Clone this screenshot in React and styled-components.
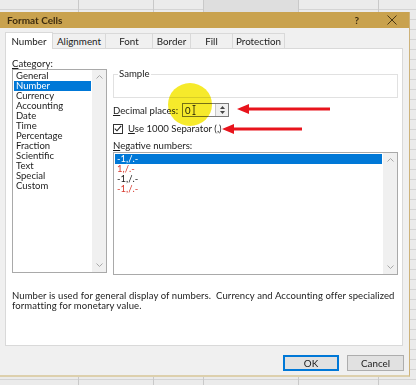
import React from 'react'
import styled, { createGlobalStyle } from 'styled-components'

const GlobalStyle = createGlobalStyle`
  html, body {
    margin: 0;
    padding: 0;
  }
  body {
    font-family: Lato, "Liberation Sans", sans-serif;
    color: #1b1b1b;
  }
`

const gridLine = x => `linear-gradient(#c9c9c9, #c9c9c9) ${x}px 0 / 1px 100% no-repeat`

const Desk = styled.div`
  width: 416px;
  height: 385px;
  overflow: hidden;
  box-sizing: border-box;
  padding-top: 12px;
  background:
    ${gridLine(78)}, ${gridLine(153)}, ${gridLine(203)}, ${gridLine(298)}, ${gridLine(378)},
    linear-gradient(#dedede, #dedede) 203px 0 / 95px 12px no-repeat,
    repeating-linear-gradient(to bottom, transparent 0 9px, #d4d4d4 9px 10px),
    #ebebeb;
`

const Dialog = styled.div`
  position: relative;
  width: 410px;
  box-sizing: border-box;
  background: #f0f0f0;
  border-right: 1px solid #cdb27a;
  border-bottom: 2px solid #ddd0ad;
`

const TitleBar = styled.div`
  display: flex;
  align-items: center;
  height: 16px;
  padding: 0 12px 0 7px;
  background: #c9a24e;
  color: #3d2c10;
  font-size: 10px;
  font-weight: 700;
`

const Title = styled.span`
  flex: 1;
`

const Help = styled.span`
  margin-right: 28px;
  font-weight: 700;
  font-size: 10px;
`

const Body = styled.div`
  padding: 5px 6px 0 5px;
`

const TabBar = styled.div`
  display: flex;
  height: 15px;
`

const Tab = styled.div`
  display: flex;
  align-items: center;
  justify-content: center;
  box-sizing: border-box;
  width: ${p => p.$w}px;
  height: ${p => (p.$active ? 17 : 15)}px;
  margin-top: ${p => (p.$active ? -1 : 0)}px;
  margin-right: -1px;
  border: 1px solid #d9d9d9;
  border-bottom: none;
  background: ${p => (p.$active ? '#fff' : '#f0f0f0')};
  position: relative;
  z-index: ${p => (p.$active ? 2 : 1)};
  font-size: 9.8px;
`

const Panel = styled.div`
  box-sizing: border-box;
  height: 298px;
  padding: 9px 4px 0 6px;
  background: #fff;
  border: 1px solid #d9d9d9;
`

const Columns = styled.div`
  display: grid;
  grid-template-columns: 95px 285px;
  column-gap: 6px;
`

const Column = styled.div`
  display: flex;
  flex-direction: column;
  padding-top: ${p => p.$top || 0}px;
`

const Label = styled.div`
  font-size: 9.6px;
  line-height: 11px;
  margin-top: ${p => p.$mt || 0}px;
`

const ListBox = styled.div`
  display: grid;
  grid-template-columns: 1fr 14px;
  box-sizing: border-box;
  height: ${p => p.$h}px;
  margin-top: ${p => p.$mt || 0}px;
  border: 1px solid #a9a9a9;
`

const Items = styled.div`
  padding: 1px;
`

const Item = styled.div`
  font-size: 9.5px;
  line-height: 10px;
  height: 10px;
  padding-left: 2px;
  white-space: nowrap;
  background: ${p => (p.$selected ? '#0078d7' : 'transparent')};
  color: ${p => (p.$selected ? '#fff' : p.$red ? '#d83a2e' : '#1b1b1b')};
`

const Scroll = styled.div`
  display: flex;
  flex-direction: column;
  justify-content: space-between;
  align-items: center;
  padding: 5px 0;
  background: #f0f0f0;
`

const Group = styled.fieldset`
  box-sizing: border-box;
  height: 29px;
  margin: 0;
  padding: 0 4px;
  border: 1px solid #e1e1e1;

  legend {
    padding: 0 1px;
    margin-left: 0;
    font-size: 9.6px;
    line-height: 10px;
  }
`

const Row = styled.div`
  display: flex;
  align-items: center;
  gap: ${p => p.$gap || 0}px;
  height: ${p => p.$h}px;
  margin-top: ${p => p.$mt || 0}px;
  font-size: 9.6px;
`

const Spinner = styled.div`
  display: flex;
  height: 14px;
  box-sizing: border-box;
  border: 1px solid #7a7a7a;
  margin-left: 4px;
`

const Field = styled.div`
  display: flex;
  align-items: center;
  gap: 1px;
  width: 30px;
  padding-left: 2px;
  font-size: 9.6px;
`

const SpinButtons = styled.div`
  display: flex;
  flex-direction: column;
  justify-content: center;
  gap: 2px;
  align-items: center;
  width: 12px;
  background: #f0f0f0;
  border-left: 1px solid #c8c8c8;
`

const Check = styled.span`
  display: flex;
  align-items: center;
  justify-content: center;
  box-sizing: border-box;
  width: 10px;
  height: 10px;
  border: 1px solid #333;
  background: #fff;
`

const Description = styled.p`
  margin: 16px 0 0;
  font-size: 9.5px;
  line-height: 10px;
  letter-spacing: 0.09px;
  white-space: nowrap;
`

const Footer = styled.div`
  display: flex;
  justify-content: flex-end;
  gap: 8px;
  height: 29px;
  box-sizing: border-box;
  padding: 9px 0 0;
  margin-right: -1px;
`

const Button = styled.button`
  width: ${p => p.$w}px;
  height: 16px;
  padding: 0;
  font-family: inherit;
  font-size: 9.8px;
  color: #1b1b1b;
  background: #e1e1e1;
  border: 1px solid ${p => (p.$primary ? '#0078d7' : '#adadad')};
  box-shadow: ${p => (p.$primary ? 'inset 0 0 0 1px #0078d7' : 'none')};
`

const Highlight = styled.div`
  position: absolute;
  left: 168px;
  top: 71px;
  width: 44px;
  height: 43px;
  border-radius: 50%;
  background: #f6ea2b;
  mix-blend-mode: multiply;
  filter: blur(0.6px);
  pointer-events: none;
`

const Marks = styled.svg`
  position: absolute;
  left: 0;
  top: 0;
  pointer-events: none;
`

const Chevron = ({ up }) => (
  <svg width="7" height="4" viewBox="0 0 7 4">
    <path d={up ? 'M0.5 3.5 L3.5 0.5 L6.5 3.5' : 'M0.5 0.5 L3.5 3.5 L6.5 0.5'} fill="none" stroke="#a8a8a8" strokeWidth="1" />
  </svg>
)

const Tri = ({ up }) => (
  <svg width="5" height="3" viewBox="0 0 5 3">
    <path d={up ? 'M0 3 L2.5 0 L5 3 Z' : 'M0 0 L2.5 3 L5 0 Z'} fill="#444" />
  </svg>
)

const IBeam = () => (
  <svg width="4" height="10" viewBox="0 0 4 10">
    <path d="M0.5 0.5 H3.5 M2 0.5 V9.5 M0.5 9.5 H3.5" fill="none" stroke="#333" strokeWidth="0.9" />
  </svg>
)

const tabs = [
  { name: 'Number', w: 48 },
  { name: 'Alignment', w: 54 },
  { name: 'Font', w: 48 },
  { name: 'Border', w: 39 },
  { name: 'Fill', w: 43 },
  { name: 'Protection', w: 53 }
]

const categories = ['General', 'Number', 'Currency', 'Accounting', 'Date', 'Time', 'Percentage', 'Fraction', 'Scientific', 'Text', 'Special', 'Custom']

const negatives = [
  { text: '-1,/.-', selected: true },
  { text: '1,/.-', red: true },
  { text: '-1,/.-' },
  { text: '-1,/.-', red: true }
]

const arrow = (x1, x2, y) =>
  `M${x2} ${y - 1.6} L${x1 + 12} ${y - 1.6} L${x1 + 12} ${y - 5} L${x1} ${y} L${x1 + 12} ${y + 5} L${x1 + 12} ${y + 1.6} L${x2} ${y + 1.6} Z`

const App = () => (
  <Desk>
    <GlobalStyle />
    <Dialog>
      <TitleBar>
        <Title>Format Cells</Title>
        <Help>?</Help>
        <svg width="10" height="10" viewBox="0 0 10 10">
          <path d="M0.5 0.5 L9.5 9.5 M9.5 0.5 L0.5 9.5" stroke="#4a3714" strokeWidth="1" />
        </svg>
      </TitleBar>
      <Body>
        <TabBar>
          {tabs.map(t => (
            <Tab key={t.name} $w={t.w} $active={t.name === 'Number'}>{t.name}</Tab>
          ))}
        </TabBar>
        <Panel>
          <Columns>
            <Column>
              <Label><u>C</u>ategory:</Label>
              <ListBox $h={204}>
                <Items>
                  {categories.map(c => (
                    <Item key={c} $selected={c === 'Number'}>{c}</Item>
                  ))}
                </Items>
                <Scroll>
                  <Chevron up />
                  <Chevron />
                </Scroll>
              </ListBox>
            </Column>
            <Column $top={11}>
              <Group>
                <legend>Sample</legend>
              </Group>
              <Row $h={14} $mt={5}>
                <span><u>D</u>ecimal places:</span>
                <Spinner>
                  <Field>0<IBeam /></Field>
                  <SpinButtons>
                    <Tri up />
                    <Tri />
                  </SpinButtons>
                </Spinner>
              </Row>
              <Row $h={11} $mt={6} $gap={5}>
                <Check>
                  <svg width="8" height="7" viewBox="0 0 8 7">
                    <path d="M0.8 3.6 L3 5.8 L7.2 0.9" fill="none" stroke="#222" strokeWidth="1.1" />
                  </svg>
                </Check>
                <span><u>U</u>se 1000 Separator (,)</span>
              </Row>
              <Label $mt={6}><u>N</u>egative numbers:</Label>
              <ListBox $h={123} $mt={1}>
                <Items>
                  {negatives.map((n, i) => (
                    <Item key={i} $selected={n.selected} $red={n.red}>{n.text}</Item>
                  ))}
                </Items>
                <Scroll>
                  <Chevron up />
                  <Chevron />
                </Scroll>
              </ListBox>
            </Column>
          </Columns>
          <Description>
            Number is used for general display of numbers.&nbsp; Currency and Accounting offer specialized
            <br />
            formatting for monetary value.
          </Description>
        </Panel>
        <Footer>
          <Button $w={56} $primary>OK</Button>
          <Button $w={57}>Cancel</Button>
        </Footer>
      </Body>
      <Highlight />
      <Marks width="410" height="365">
        <path d={arrow(237, 330, 97)} fill="#e8141c" />
        <path d={arrow(222, 302, 117)} fill="#e8141c" />
      </Marks>
    </Dialog>
  </Desk>
)

export default App
